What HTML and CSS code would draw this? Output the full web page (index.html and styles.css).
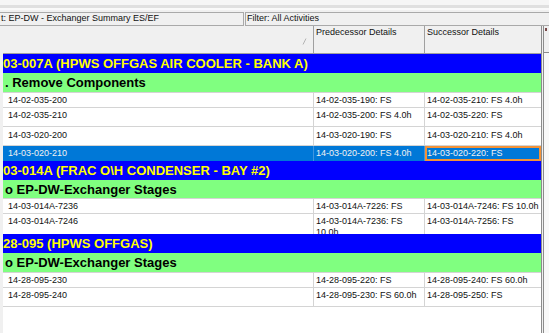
FILE: index.html
```html
<!DOCTYPE html>
<html lang="en">
<head>
    <meta charset="UTF-8">
    <title>EP-DW - Exchanger Summary ES/EF</title>
    <link rel="stylesheet" href="styles.css">
</head>
<body>

    <div class="topbar"></div>

    <!-- Layout / filter bar -->
    <div class="filters">
        <div class="layout-box">t: EP-DW - Exchanger Summary ES/EF</div>
        <div class="filter-box">Filter: All Activities</div>
    </div>

    <div class="main">
        <div class="grid">
            <div class="head">
                <div class="hcell sort">
                    <svg width="5" height="7" viewBox="0 0 5 7"><path d="M1 6.5 L4 0.5" stroke="#b4b4b4" stroke-width="1" fill="none"/></svg>
                </div>
                <div class="hcell">Predecessor Details</div>
                <div class="hcell">Successor Details</div>
            </div>

            <div class="band-blue">03-007A (HPWS OFFGAS AIR COOLER - BANK A)</div>
            <div class="band-green">. Remove Components</div>
            <div class="row h14">
                <div>14-02-035-200</div>
                <div>14-02-035-190: FS</div>
                <div>14-02-035-210: FS 4.0h</div>
            </div>
            <div class="row h18">
                <div>14-02-035-210</div>
                <div>14-02-035-200: FS 4.0h</div>
                <div>14-02-035-220: FS</div>
            </div>
            <div class="row h18 low">
                <div>14-03-020-200</div>
                <div>14-03-020-190: FS</div>
                <div>14-03-020-210: FS 4.0h</div>
            </div>
            <div class="row sel h15">
                <div>14-03-020-210</div>
                <div>14-03-020-200: FS 4.0h</div>
                <div class="focus">14-03-020-220: FS</div>
            </div>

            <div class="band-blue">03-014A (FRAC O\H CONDENSER - BAY #2)</div>
            <div class="band-green short">o EP-DW-Exchanger Stages</div>
            <div class="row h14">
                <div>14-03-014A-7236</div>
                <div>14-03-014A-7226: FS</div>
                <div>14-03-014A-7246: FS 10.0h</div>
            </div>
            <div class="row h20 open">
                <div>14-03-014A-7246</div>
                <div>14-03-014A-7236: FS 10.0h</div>
                <div>14-03-014A-7256: FS</div>
            </div>

            <div class="band-blue">28-095 (HPWS OFFGAS)</div>
            <div class="band-green">o EP-DW-Exchanger Stages</div>
            <div class="row h14">
                <div>14-28-095-230</div>
                <div>14-28-095-220: FS</div>
                <div>14-28-095-240: FS 60.0h</div>
            </div>
            <div class="row h18">
                <div>14-28-095-240</div>
                <div>14-28-095-230: FS 60.0h</div>
                <div>14-28-095-250: FS</div>
            </div>
        </div>

        <div class="side">
            <div class="side-head"><span class="side-mark"></span></div>
        </div>
    </div>

</body>
</html>
```

FILE: styles.css
```css
body {
    margin: 0;
    width: 549px;
    height: 333px;
    overflow: hidden;
    background: #f0f0f0;
    font-family: "Liberation Sans", Arial, sans-serif;
    font-size: 9px;
    line-height: 11px;
    color: #111;
}

.topbar {
    height: 12px;
    background: linear-gradient(to bottom, #f6f6f6 0 5px, #e0e0e0 5px 8px, #fafafa 8px 10px, #f0f0f0 10px);
}

/* Layout and filter boxes */
.filters {
    display: flex;
    gap: 1px;
    height: 14px;
}

.layout-box,
.filter-box {
    box-sizing: border-box;
    height: 14px;
    border: 1px solid #a9a9a9;
    background: #f0f0f0;
    padding-left: 1px;
    white-space: nowrap;
    overflow: hidden;
}

.layout-box {
    width: 245px;
    margin-left: -1px;
}

.filter-box {
    flex: 1;
    margin-right: -2px;
}

.main {
    display: flex;
    height: 307px;
    padding-left: 3px;
}

.grid {
    width: 538px;
    border-right: 1px solid #8c8c8c;
    background: #fff;
    display: flex;
    flex-direction: column;
}

/* Column header */
.head {
    display: grid;
    grid-template-columns: 311px 111px 116px;
    height: 27px;
    border-bottom: 1px solid #a0a0a0;
    background: #f0f0f0;
}

.hcell {
    padding: 1px 0 0 2px;
    border-right: 1px solid #a0a0a0;
    white-space: nowrap;
}

.hcell:last-child {
    border-right: none;
}

.sort {
    display: flex;
    align-items: center;
    justify-content: flex-end;
    padding: 3px 6px 0 0;
}

/* Group bands */
.band-blue,
.band-green {
    height: 19px;
    font-size: 13px;
    font-weight: bold;
    line-height: 20px;
    white-space: nowrap;
    overflow: hidden;
}

.band-blue {
    background: #0000ff;
    color: #ffff00;
    padding-left: 0;
}

.band-green {
    background: #80ff80;
    color: #000;
    padding-left: 2px;
    border-bottom: 1px solid #d4d4d4;
}

.band-green.short {
    height: 18px;
}

/* Activity rows */
.row {
    display: grid;
    grid-template-columns: 311px 111px 116px;
    border-bottom: 1px solid #d4d4d4;
    overflow: hidden;
}

.row > div {
    padding: 2px 0 0 2px;
    border-right: 1px solid #d4d4d4;
    overflow: hidden;
}

.row > div:first-child {
    padding-left: 5px;
}

.row > div:last-child {
    border-right: none;
}

.row.low > div {
    padding-top: 3px;
}

.h14 { height: 14px; }
.h15 { height: 15px; }
.h18 { height: 18px; }
.h20 { height: 20px; }

.row.open {
    border-bottom: none;
}

.row.sel {
    background: #0078d7;
    color: #f2f2f2;
    border-bottom: none;
}

.row.sel > div {
    border-right-color: #3f95df;
}

.row.sel > .focus {
    outline: 2px solid #f39237;
    outline-offset: -2px;
}

/* Right hand panel */
.side {
    width: 5px;
    margin-left: 1px;
    border-left: 1px solid #8c8c8c;
    background: #f8f8f8;
}

.side-head {
    height: 26px;
    border-bottom: 1px solid #8c8c8c;
    background: #f0f0f0;
    position: relative;
}

.side-mark {
    position: absolute;
    left: 1px;
    top: 2px;
    width: 2px;
    height: 3px;
    background: #7a4a4a;
}
```
